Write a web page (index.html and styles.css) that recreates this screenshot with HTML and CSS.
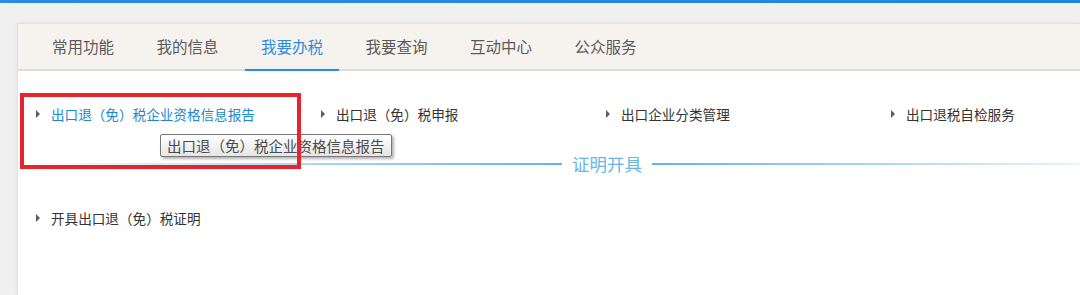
FILE: index.html
```html
<!DOCTYPE html>
<html lang="zh-CN">
  <head>
    <meta charset="UTF-8" />
    <title>我要办税</title>
    <link rel="stylesheet" href="styles.css">
  </head>
  <body>
    <div class="top-bar"></div>
    <div class="panel">
      <ul class="tabs">
        <li class="tab">常用功能</li>
        <li class="tab">我的信息</li>
        <li class="tab active">我要办税</li>
        <li class="tab">我要查询</li>
        <li class="tab">互动中心</li>
        <li class="tab">公众服务</li>
      </ul>

      <div class="content">
        <ul class="menu-grid">
          <li class="menu-item hover">
            <span class="arrow"></span>
            <a href="#">出口退（免）税企业资格信息报告</a>
            <span class="tooltip">出口退（免）税企业资格信息报告</span>
          </li>
          <li class="menu-item"><span class="arrow"></span><a href="#">出口退（免）税申报</a></li>
          <li class="menu-item"><span class="arrow"></span><a href="#">出口企业分类管理</a></li>
          <li class="menu-item"><span class="arrow"></span><a href="#">出口退税自检服务</a></li>
        </ul>

        <div class="section-title">
          <span class="line left"></span>
          <span class="title-text">证明开具</span>
          <span class="line right"></span>
        </div>

        <ul class="menu-grid">
          <li class="menu-item"><span class="arrow"></span><a href="#">开具出口退（免）税证明</a></li>
        </ul>
      </div>

      <!-- 标注框 -->
      <div class="mark-box"></div>
    </div>
  </body>
</html>
```

FILE: styles.css
```css
/* 全局样式 */
* {
  box-sizing: border-box;
  margin: 0;
  padding: 0;
}
ul {
  list-style: none;
}
a {
  text-decoration: none;
}
body {
  font-family: "Noto Sans CJK SC", "Microsoft YaHei", sans-serif;
  background-color: #f0f0f0;
  overflow: hidden;
  height: 295px;
}
.top-bar {
  height: 3px;
  background: linear-gradient(90deg, #2a8be0, #1f86dc);
}
/* 主面板（右侧和底部超出可视区域） */
.panel {
  position: relative;
  height: 272px;
  margin: 20px 0 0 17px;
  background: #ffffff;
  border: 1px solid #e2e2e2;
  border-right: none;
  border-bottom: none;
  box-shadow: 0 0 3px rgba(0, 0, 0, 0.08);
}
/* 选项卡 */
.tabs {
  display: flex;
  height: 47px;
  padding-left: 18px;
  background-color: #f6f3ee;
  border-bottom: 2px solid #dedede;
}
.tab {
  padding: 0 16px;
  margin-right: 10.5px;
  line-height: 45px;
  font-size: 15.5px;
  color: #5a5a5a;
  cursor: pointer;
}
.tab.active {
  color: #2c8ce0;
  border-bottom: 2px solid #2c8ce0;
  margin-bottom: -2px;
}
/* 内容区 */
.content {
  padding-top: 33px;
}
.menu-grid {
  display: grid;
  grid-template-columns: 285px 285px 285px auto;
  padding-left: 18px;
}
.menu-item {
  position: relative;
  display: flex;
  align-items: center;
  height: 20px;
  font-size: 13.6px;
}
.menu-item a {
  color: #333333;
}
.menu-item.hover a {
  color: #1b87d0;
}
.arrow {
  width: 0;
  height: 0;
  border-left: 4px solid #5e5e5e;
  border-top: 4px solid transparent;
  border-bottom: 4px solid transparent;
  margin-right: 11px;
}
/* 悬停提示 */
.tooltip {
  position: absolute;
  left: 124px;
  top: 30px;
  height: 23px;
  padding: 0 6px;
  line-height: 21px;
  font-size: 14.5px;
  color: #4a4a4a;
  white-space: nowrap;
  background: linear-gradient(180deg, #ffffff, #e6e6e6);
  border: 1px solid #777777;
  border-radius: 2px;
  box-shadow: 2px 2px 3px rgba(0, 0, 0, 0.3);
  z-index: 2;
}
/* 分组标题 */
.section-title {
  display: flex;
  align-items: center;
  height: 20px;
  margin: 30px 0 34px;
}
.section-title .line {
  height: 2px;
}
.section-title .line.left {
  width: 544px;
  background: linear-gradient(90deg, rgba(108, 185, 230, 0), #62b4e4);
}
.section-title .line.right {
  flex: 1;
  background: linear-gradient(90deg, #62b4e4, rgba(108, 185, 230, 0.15));
}
.title-text {
  padding: 0 10px;
  font-size: 17.5px;
  color: #6ab6e3;
  line-height: 20px;
}
/* 红色标注框 */
.mark-box {
  position: absolute;
  left: 2px;
  top: 69px;
  width: 281px;
  height: 76px;
  border: 4px solid #e8232b;
  z-index: 3;
}
```
